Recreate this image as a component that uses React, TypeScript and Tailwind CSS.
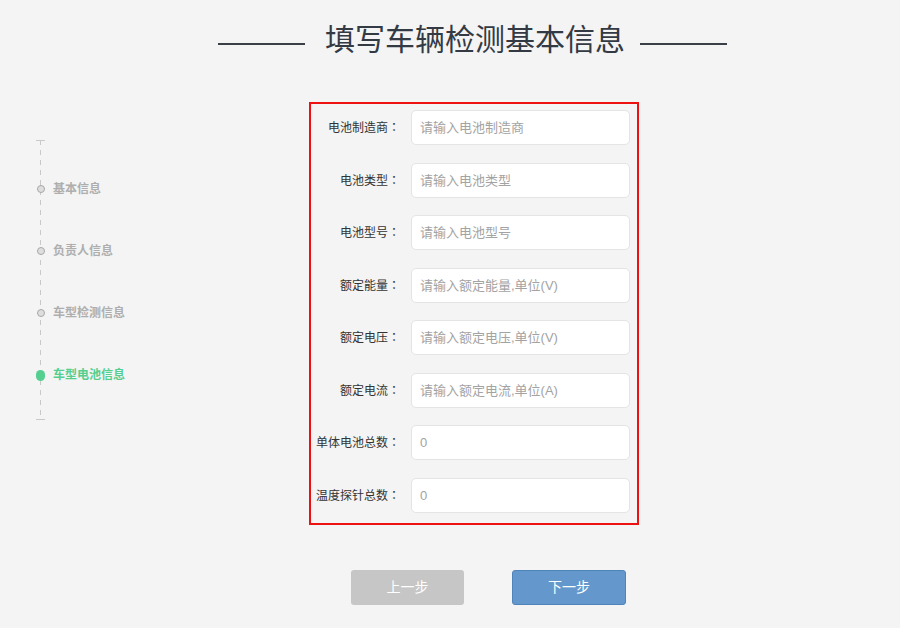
const FIELDS = [
  { label: '电池制造商', ph: '请输入电池制造商' },
  { label: '电池类型', ph: '请输入电池类型' },
  { label: '电池型号', ph: '请输入电池型号' },
  { label: '额定能量', ph: '请输入额定能量,单位(V)' },
  { label: '额定电压', ph: '请输入额定电压,单位(V)' },
  { label: '额定电流', ph: '请输入额定电流,单位(A)' },
  { label: '单体电池总数', ph: '0' },
  { label: '温度探针总数', ph: '0' },
];

const STEPS = [
  { name: '基本信息', active: false },
  { name: '负责人信息', active: false },
  { name: '车型检测信息', active: false },
  { name: '车型电池信息', active: true },
];

const FONT = "font-['Liberation_Sans','Noto_Sans_CJK_SC',sans-serif]";

function Steps() {
  return (
    <div className="relative w-[273px] h-[280px] mt-[38px]">
      {/* dashed rail */}
      <div className="absolute left-[4px] top-0 w-px h-full bg-[repeating-linear-gradient(to_bottom,#c9c9c9_0_5px,transparent_5px_10px)]" />
      <div className="absolute left-0 top-0 w-[9px] h-px bg-[#c9c9c9]" />
      <div className="absolute left-0 bottom-0 w-[9px] h-px bg-[#c9c9c9]" />
      <div className="flex flex-col gap-[46px] pt-[41px]">
        {STEPS.map((s) => (
          <div key={s.name} className="relative flex items-center h-[16px]">
            <div className="w-[9px] flex justify-center">
              {s.active ? (
                <span className="block w-[11px] h-[11px] rounded-full bg-[#55cf8f]" />
              ) : (
                <span className="block w-[8px] h-[8px] rounded-full bg-[#dedede] border border-[#a8a8a8]" />
              )}
            </div>
            <span className={`ml-[8px] text-[12px] font-bold leading-[16px] ${s.active ? 'text-[#55cf8f]' : 'text-[#aeaeae]'}`}>
              {s.name}
            </span>
          </div>
        ))}
      </div>
    </div>
  );
}

export default function App() {
  return (
    <div className={`w-[900px] h-[628px] bg-[#f4f4f4] overflow-hidden ${FONT}`}>

      {/* Title */}
      <div className="flex items-start pl-[218px] pt-[20px]">
        <div className="w-[87px] h-[2px] bg-[#3a3f47] mt-[23px]" />
        <h1 className="ml-[20px] mr-[15px] text-[30px] leading-[40px] text-[#333a44] font-normal">
          填写车辆检测基本信息
        </h1>
        <div className="w-[87px] h-[2px] bg-[#3a3f47] mt-[23px]" />
      </div>

      {/* Body */}
      <div className="flex pl-[36px] mt-[42px]">
        <Steps />
        <div className="w-[330px] h-[423px] border-2 border-[#ee1111] pt-[6px] pr-[7px] flex flex-col gap-[17.5px]">
          {FIELDS.map((f) => (
            <div key={f.label} className="flex items-center">
              <label className="w-[89px] text-right text-[12px] text-[#333] whitespace-nowrap">
                {f.label}
                <span className="font-['Noto_Sans_CJK_TC',sans-serif]">：</span>
              </label>
              <input
                placeholder={f.ph}
                className="ml-[11px] w-[219px] h-[35px] bg-white border border-[#e4e4e4] rounded-[5px] pl-[8px] text-[13px] text-[#333] placeholder:text-[#a3a3a3] outline-none"
              />
            </div>
          ))}
        </div>
      </div>

      {/* Buttons */}
      <div className="flex gap-[48px] pl-[351px] mt-[45px]">
        <button className="w-[113px] h-[35px] rounded-[3px] bg-[#c6c6c6] text-white text-[14px]">上一步</button>
        <button className="w-[114px] h-[35px] rounded-[3px] bg-[#6498cc] border border-[#4f84bb] text-white text-[14px]">下一步</button>
      </div>
    </div>
  );
}
